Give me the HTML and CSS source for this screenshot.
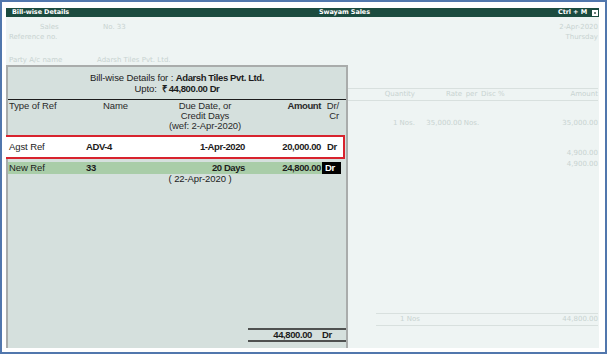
FILE: index.html
```html
<!DOCTYPE html>
<html>
<head>
<meta charset="utf-8">
<link rel="stylesheet" href="styles.css">
</head>
<body>
<div class="frame">
  <div class="win">
    <div class="titlebar">
      <span class="tb-left">Bill-wise Details</span>
      <span class="tb-center">Swayam Sales</span>
      <span class="tb-right">Ctrl + M <span class="tb-box"></span></span>
    </div>
    <div class="content">
      <div class="voucher">
        <div class="v-row1">
          <span class="v-type">Sales</span>
          <span>No. 33</span>
          <span class="v-right">2-Apr-2020</span>
        </div>
        <div class="v-row2">
          <span class="v-ref">Reference no.</span>
          <span class="v-right">Thursday</span>
        </div>
        <div class="v-row3">
          <span class="v-party">Party A/c name</span>
          <span>Adarsh Tiles Pvt. Ltd.</span>
        </div>
        <div class="v-items-head">
          <span></span>
          <span class="r">Quantity</span>
          <span class="r">Rate</span>
          <span class="c">per</span>
          <span class="c">Disc %</span>
          <span class="r">Amount</span>
        </div>
        <div class="v-item">
          <span></span>
          <span class="r">1 Nos.</span>
          <span class="r">35,000.00</span>
          <span class="c">Nos.</span>
          <span></span>
          <span class="r">35,000.00</span>
        </div>
        <div class="v-tax first"><span>4,900.00</span></div>
        <div class="v-tax"><span>4,900.00</span></div>
        <div class="v-total">
          <span class="v-total-qty">1 Nos</span>
          <span class="v-right">44,800.00</span>
        </div>
      </div>

      <div class="panel">
        <div class="p-title">
          <div>Bill-wise Details for : <b>Adarsh Tiles Pvt. Ltd.</b></div>
          <div>Upto: &nbsp;<b>₹ 44,800.00 Dr</b></div>
        </div>
        <div class="p-rule"></div>
        <div class="p-grid p-head">
          <span class="c1">Type of Ref</span>
          <span class="c2 h-name">Name</span>
          <span class="c3 h-due">Due Date, or<br>Credit Days<br>(wef: 2-Apr-2020)</span>
          <span class="c4"><b>Amount</b></span>
          <span class="c5 h-drcr">Dr/<br>Cr</span>
        </div>
        <div class="p-grid p-row sel">
          <span class="c1">Agst Ref</span>
          <span class="c2"><b>ADV-4</b></span>
          <span class="c3"><b>1-Apr-2020</b></span>
          <span class="c4"><b>20,000.00</b></span>
          <span class="c5"><b>Dr</b></span>
        </div>
        <div class="p-grid p-row cur">
          <span class="c1">New Ref</span>
          <span class="c2"><b>33</b></span>
          <span class="c3"><b>20 Days</b></span>
          <span class="c4"><b>24,800.00</b></span>
          <span class="c5"><b>Dr</b></span>
        </div>
        <div class="p-grid p-sub">
          <span></span>
          <span></span>
          <span class="c3 sub-date">( 22-Apr-2020 )</span>
          <span></span>
          <span></span>
        </div>
        <div class="p-spacer"></div>
        <div class="p-total">
          <span class="t-amt">44,800.00</span>
          <span class="t-dr">Dr</span>
        </div>
      </div>
    </div>
  </div>
</div>
</body>
</html>
```

FILE: styles.css
```css
* { box-sizing: border-box; }
html, body { margin: 0; padding: 0; background: #ffffff; }

.frame {
  width: 607px;
  height: 354px;
  border: 2px solid #5177ad;
  padding: 6px 6px 4px 4px;
  background: #ffffff;
}

.win {
  height: 100%;
  display: flex;
  flex-direction: column;
}

.titlebar {
  height: 9px;
  background: #1b4b3f;
  color: #ffffff;
  font-family: "DejaVu Sans", sans-serif;
  font-weight: bold;
  font-size: 6.5px;
  line-height: 9px;
  letter-spacing: -0.1px;
  display: grid;
  grid-template-columns: 307px 1fr auto;
  padding-left: 6px;
  padding-right: 1px;
  white-space: nowrap;
}
.tb-right { display: flex; align-items: center; gap: 5px; }
.tb-box {
  display: inline-block;
  width: 6px;
  height: 6px;
  background: #6d7f79;
  border: 2px solid #ffffff;
}

.content {
  flex: 1;
  position: relative;
  background: #eef4f3;
  overflow: hidden;
}

/* faded voucher behind the popup */
.voucher {
  height: 100%;
  display: flex;
  flex-direction: column;
  color: #c8d3d1;
  font-family: "DejaVu Sans", sans-serif;
  font-size: 7px;
  line-height: 10px;
  padding: 5px 1px 0 0;
  white-space: nowrap;
}
.v-row1, .v-row2, .v-row3 { display: flex; height: 10px; }
.v-type { margin-left: 34px; width: 63px; }
.v-right { margin-left: auto; }
.v-ref { padding-left: 3px; }
.v-row3 { margin-top: 13px; }
.v-party { padding-left: 3px; width: 91px; }

.v-items-head, .v-item {
  display: grid;
  grid-template-columns: 360px 49px 47px 19px 22px 1fr;
}
.v-items-head {
  margin-top: 23px;
  border-top: 1px solid #d8e0de;
  border-bottom: 1px solid #d8e0de;
  line-height: 11px;
}
.v-item { margin-top: 17px; }
.r { text-align: right; }
.c { text-align: center; }
.v-tax { text-align: right; }
.v-tax.first { margin-top: 20px; }
.v-tax + .v-tax { margin-top: 1px; }

.v-total {
  margin-top: auto;
  margin-bottom: 22px;
  margin-left: 370px;
  display: flex;
  border-top: 1px solid #d8e0de;
  border-bottom: 1px solid #d8e0de;
  line-height: 11px;
}
.v-total-qty { padding-left: 24px; }

/* popup panel */
.panel {
  position: absolute;
  left: 0;
  top: 48px;
  bottom: 0;
  width: 342px;
  border: 2px solid #a9acab;
  border-bottom: none;
  background: #d5e0dd;
  display: flex;
  flex-direction: column;
  font-family: "Liberation Sans", Arial, sans-serif;
  font-size: 9.5px;
  letter-spacing: -0.1px;
  color: #1c1c1c;
  white-space: nowrap;
}
.panel b { letter-spacing: -0.4px; }

.p-title {
  padding-top: 5px;
  text-align: center;
  line-height: 11px;
}
.p-rule {
  margin-top: 5px;
  height: 1px;
  background: #1c1c1c;
}

.p-grid {
  display: grid;
  grid-template-columns: 78px 74px 90px 72px 19px;
}
.p-head {
  padding-top: 1px;
  line-height: 10px;
  color: #2a2a2a;
}
.c1 { padding-left: 1px; }
.h-name { padding-left: 17px; }
.h-due { text-align: center; }
.c3 { text-align: right; padding-right: 5px; }
.h-due.c3 { text-align: center; padding-right: 0; }
.c4 { text-align: right; padding-right: 1px; }
.c5 { padding-left: 5px; }
.h-drcr { text-align: right; padding-right: 2px; padding-left: 0; }

.p-row { line-height: 20px; }
.p-row.sel {
  margin-top: 4px;
  margin-left: -4px;
  width: 341px;
  height: 24px;
  border: 2px solid #d8232e;
  background: #ffffff;
  padding-left: 2px;
}
.p-row.cur {
  margin-top: 3px;
  height: 12px;
  line-height: 12px;
}
.p-row.cur .c1, .p-row.cur .c2, .p-row.cur .c3, .p-row.cur .c4 {
  background: #a9cda8;
}
.p-row.cur .c5 {
  background: #000000;
  color: #ffffff;
  padding-left: 3px;
}

.p-sub { line-height: 10px; }
.sub-date { text-align: center; padding-right: 10px; }

.p-spacer { flex: 1; }

.p-total {
  margin-left: auto;
  width: 98px;
  margin-bottom: 6px;
  border-top: 2px solid #4f5150;
  border-bottom: 2px solid #4f5150;
  line-height: 10px;
  display: flex;
  font-weight: bold;
  letter-spacing: -0.4px;
}
.t-amt { width: 64px; text-align: right; }
.t-dr { padding-left: 10px; }
```
